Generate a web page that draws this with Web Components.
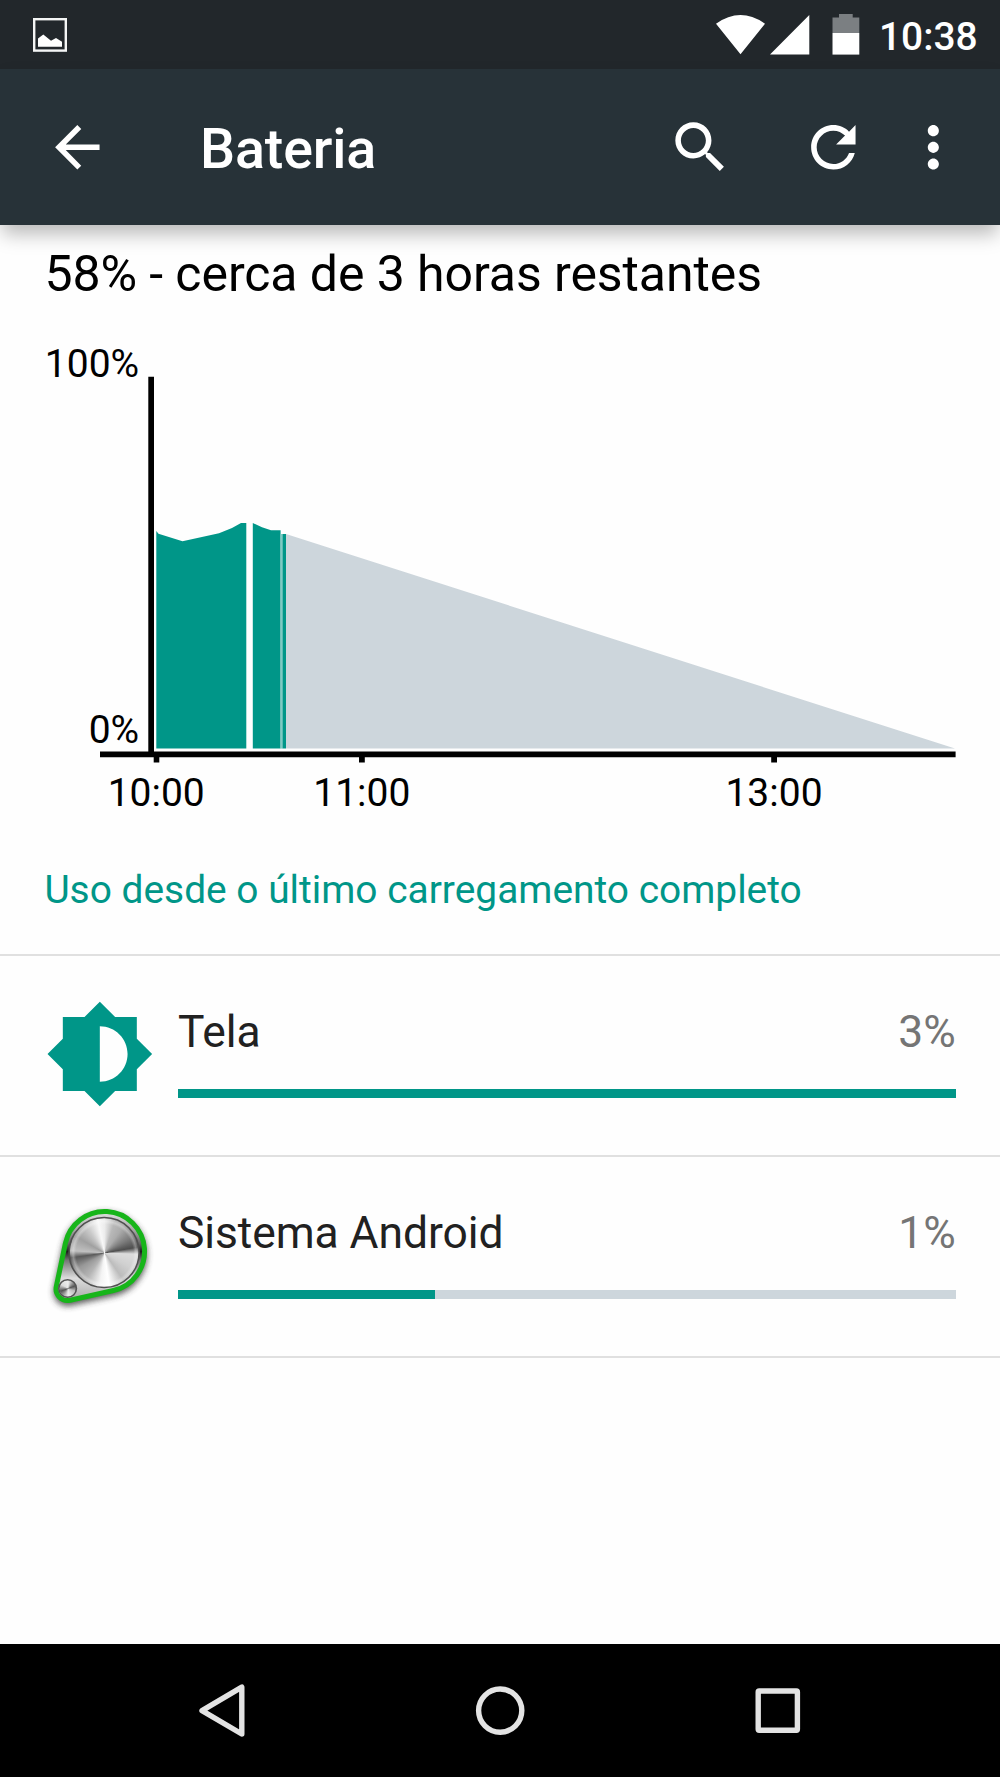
<!DOCTYPE html>
<html lang="pt-BR">
<head>
<meta charset="utf-8">
<title>Bateria</title>
<style>
html,body{margin:0;padding:0}
body{width:1000px;height:1777px;background:#fefefe;font-family:Roboto,"Liberation Sans",sans-serif;color:#000;overflow:hidden}
</style>
</head>
<body>
<battery-screen></battery-screen>
<script>
const define = (name, html) => {
  const tpl = document.createElement('template');
  tpl.innerHTML = html;
  customElements.define(name, class extends HTMLElement {
    constructor() {
      super();
      this.attachShadow({ mode: 'open' }).append(tpl.content.cloneNode(true));
    }
  });
};

define('status-bar', `
<style>
:host{display:flex;justify-content:space-between;height:69px;background:#22272b;color:#fff;flex:none}
svg{display:block}
.right{display:flex}
.clock{font-size:38.9px;font-weight:500;line-height:74px;width:121px;white-space:nowrap}
</style>
<svg width="100" height="69" viewBox="0 0 100 69"><rect x="34.2" y="19.2" width="31.6" height="31.4" fill="none" stroke="#f4f5f5" stroke-width="2.4"/><path d="M38 38.5L43.3 34.5 51 40.8 56 38 62 41.8V46.7H38z" fill="#fff"/></svg>
<div class="right">
<svg width="180" height="69" viewBox="699 0 180 69"><path d="M716 23.7Q740.5 6.3 765 23.7L740.5 54.3zM770 54.6L809.3 15V54.6z" fill="#fff"/><path d="M832.5 33V17.6H839V14H852.7V17.6H859.3V33z" fill="#7b7f82"/><path d="M832.5 33H859.3V54.6H832.5z" fill="#fff"/></svg>
<div class="clock">10:38</div>
</div>`);

define('app-bar', `
<style>
:host{display:flex;align-items:center;height:156px;background:#273238;color:#fff;flex:none;box-sizing:border-box;padding:0 33px 0 44.4px;position:relative;z-index:1;box-shadow:0 11px 18px -2px rgba(0,0,0,.27)}
svg{display:block;width:66.67px;height:66.67px;fill:currentColor;flex:none}
.title{flex:1;margin-left:89px;font-size:55.6px;font-weight:500;line-height:66px;padding-top:4px;letter-spacing:-.15px}
.s{margin-right:66.7px}
</style>
<svg viewBox="0 0 24 24"><path d="M20 11H7.83l5.59-5.59L12 4l-8 8 8 8 1.41-1.41L7.83 13H20v-2z"/></svg>
<div class="title"><slot></slot></div>
<svg class="s" viewBox="0 0 24 24"><path d="M15.5 14h-.79l-.28-.27C15.41 12.59 16 11.11 16 9.5 16 5.91 13.09 3 9.5 3S3 5.91 3 9.5 5.91 16 9.5 16c1.61 0 3.09-.59 4.23-1.57l.27.28v.79l5 4.99L20.49 19l-4.99-5zm-6 0C7.01 14 5 11.99 5 9.5S7.01 5 9.5 5 14 7.01 14 9.5 11.99 14 9.5 14z"/></svg>
<svg style="margin-right:33.3px" viewBox="0 0 24 24"><path d="M17.65 6.35C16.2 4.9 14.21 4 12 4c-4.42 0-7.99 3.58-7.99 8s3.57 8 7.99 8c3.73 0 6.84-2.55 7.73-6h-2.08c-.82 2.33-3.04 4-5.65 4-3.31 0-6-2.69-6-6s2.69-6 6-6c1.66 0 3.14.69 4.22 1.78L13 11h7V4l-2.35 2.35z"/></svg>
<svg viewBox="0 0 24 24"><path d="M12 8c1.1 0 2-.9 2-2s-.9-2-2-2-2 .9-2 2 .9 2 2 2zm0 2c-1.1 0-2 .9-2 2s.9 2 2 2 2-.9 2-2-.9-2-2-2zm0 6c-1.1 0-2 .9-2 2s.9 2 2 2 2-.9 2-2-.9-2-2-2z"/></svg>`);

define('battery-chart', `
<style>
:host{display:block}
svg{display:block}
text{font:400 39px Roboto,"Liberation Sans",sans-serif;fill:#000}
</style>
<svg width="1000" height="557" viewBox="0 303 1000 557">
<path d="M286 534L955 748.6H286z" fill="#cdd6dc"/>
<path d="M156.3 531L158.5 533.7 182.5 541.3 219 533.2 232 528 241 523H246.3V748.6H156.3zM252.8 523L262 527.3 271 530.2H280.6V748.6H252.8zM282.3 534H286V748.6H282.3z" fill="#009688"/>
<path d="M280.6 534H282.3V748.6H280.6z" fill="#7fcac3"/>
<path d="M148.3 376.7H154V751.5H955.6V757.2H777V762.5H771.2V757.2H364.8V762.5H359V757.2H159.3V762.5H153.7V757.2H100V751.5H148.3z" fill="#000"/>
<text x="139.2" y="377" text-anchor="end">100%</text>
<text x="139.2" y="743" text-anchor="end">0%</text>
<text x="156.2" y="806" text-anchor="middle">10:00</text>
<text x="361.8" y="806" text-anchor="middle">11:00</text>
<text x="774" y="806" text-anchor="middle">13:00</text>
</svg>`);

define('section-label', `
<style>
:host{display:block;height:92.8px;padding-top:1.2px;border-bottom:2px solid #e0e0e0;padding-left:44.4px;color:#009688;font-size:38.9px;line-height:58.4px;box-sizing:content-box;white-space:nowrap}
</style><slot></slot>`);

define('usage-row', `
<style>
:host{display:flex;box-sizing:border-box;height:200.8px;border-bottom:2px solid #e0e0e0;padding:43.5px 44.4px 0;gap:22.5px}
.icon{width:111px;height:111px;flex:none}
.body{flex:1;display:flex;flex-direction:column}
.line{display:flex;justify-content:space-between;font-size:44.4px;line-height:66px;height:89.5px;color:#212121;letter-spacing:-.06px}
.pct{color:#757575}
.track{height:9.5px;background:#cdd6dc}
.fill{height:100%;width:var(--level,0%);background:#009688}
</style>
<div class="icon"><slot name="icon"></slot></div>
<div class="body">
<div class="line"><slot></slot><span class="pct"><slot name="pct"></slot></span></div>
<div class="track"><div class="fill"></div></div>
</div>`);

define('brightness-icon', `
<style>:host,svg{display:block}</style>
<svg width="111" height="111" viewBox="-.07 .1 24 24" fill="#009688"><path d="M20 15.31L23.31 12 20 8.69V4h-4.69L12 .69 8.69 4H4v4.69L.69 12 4 15.31V20h4.69L12 23.31 15.31 20H20v-4.69zM12 18V6c3.31 0 6 2.69 6 6s-2.69 6-6 6z"/></svg>`);

define('system-icon', `
<style>
:host,svg{display:block}
.knob{width:70px;height:70px;border-radius:50%;background:radial-gradient(circle closest-side,transparent 82%,rgba(255,255,255,.3) 90%,transparent 98%),conic-gradient(from 0deg,#ececec 0deg,#b8b8b8 18deg,#acacac 35deg,#7c7c7c 60deg,#4e4e4e 80deg,#dcdcdc 92deg,#d0d0d0 120deg,#bcbcbc 145deg,#fff 172deg,#f4f4f4 188deg,#b5b5b5 215deg,#989898 240deg,#5a5a5a 262deg,#c0c0c0 274deg,#a0a0a0 300deg,#c8c8c8 325deg,#f8f8f8 348deg,#ececec 360deg)}
.small{width:17px;height:17px;border-radius:50%;background:conic-gradient(#eee,#555 70deg,#bbb 110deg,#eee 180deg,#555 250deg,#ddd 300deg,#eee)}
</style>
<svg width="111" height="111" viewBox="44.4 1200 111 111" style="overflow:visible">
<defs><filter id="b" x="-20%" y="-20%" width="140%" height="140%"><feGaussianBlur stdDeviation="3"/></filter>
<linearGradient id="m" x1="0" y1="0" x2="0" y2="1"><stop offset="0" stop-color="#e2e2e2"/><stop offset=".2" stop-color="#aaa"/><stop offset=".36" stop-color="#666"/><stop offset=".45" stop-color="#1c1c1c"/><stop offset=".55" stop-color="#777"/><stop offset=".75" stop-color="#ddd"/><stop offset="1" stop-color="#aaa"/></linearGradient></defs>
<path d="M56.7 1286.6L65.8 1243.3A40 40 0 1 1 113.8 1290.5L70.5 1300.2A11.5 11.5 0 0 1 56.7 1286.6z" transform="translate(0 3)" fill="#333" stroke="#333" stroke-width="5" opacity=".8" filter="url(#b)"/>
<path d="M56.7 1286.6L65.8 1243.3A40 40 0 1 1 113.8 1290.5L70.5 1300.2A11.5 11.5 0 0 1 56.7 1286.6z" fill="url(#m)" stroke="#17b51a" stroke-width="5"/>
<foreignObject x="69.5" y="1217.5" width="70" height="70"><div class="knob"></div></foreignObject>
<circle cx="104.5" cy="1252.5" r="35" fill="none" stroke="#505050" stroke-width="1.6"/>
<foreignObject x="59.5" y="1280" width="17" height="17"><div class="small"></div></foreignObject>
<circle cx="68" cy="1288.5" r="8.8" fill="none" stroke="#555" stroke-width="1.6"/>
</svg>`);

define('nav-bar', `
<style>
:host{display:flex;height:133.4px;background:#000;flex:none;justify-content:center;align-items:center}
svg{display:block}
</style>
<svg width="1000" height="133" viewBox="0 1644 1000 133" fill="none" stroke="#e3e3e3" stroke-width="5.4" stroke-linejoin="round"><path d="M202 1710.6L241.8 1687.2V1734z"/><circle cx="500.2" cy="1710.6" r="21.6"/><rect x="758.2" y="1691" width="39.2" height="39.2" rx="1"/></svg>`);

define('battery-screen', `
<style>
:host{display:flex;flex-direction:column;height:1777px}
main{flex:1;min-height:0}
h1{margin:0;height:78px;box-sizing:border-box;padding:19.4px 0 0 44.4px;font-size:50px;line-height:60px;font-weight:400;white-space:nowrap;letter-spacing:-.08px}
</style>
<status-bar></status-bar>
<app-bar>Bateria</app-bar>
<main>
<h1>58% - cerca de 3 horas restantes</h1>
<battery-chart></battery-chart>
<section-label>Uso desde o último carregamento completo</section-label>
<usage-row style="--level:100%"><brightness-icon slot="icon"></brightness-icon>Tela<span slot="pct">3%</span></usage-row>
<usage-row style="--level:33.1%"><system-icon slot="icon"></system-icon>Sistema Android<span slot="pct">1%</span></usage-row>
</main>
<nav-bar></nav-bar>`);
</script>
</body>
</html>
